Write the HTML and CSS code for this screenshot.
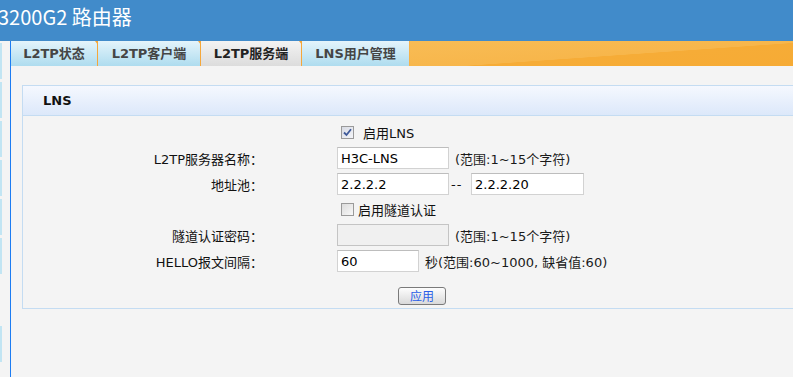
FILE: index.html
```html
<!DOCTYPE html>
<html lang="zh-CN">
<head>
    <meta charset="UTF-8">
    <title>L2TP服务端</title>
    <link rel="stylesheet" href="styles.css">
</head>
<body>
    <div class="header">
        <h1 class="title">3200G2 路由器</h1>
    </div>
    <div class="main">
        <div class="sidebar">
            <div class="side-item"></div>
            <div class="side-item"></div>
            <div class="side-item"></div>
            <div class="side-item"></div>
            <div class="side-item"></div>
            <div class="side-item"></div>
            <div class="side-item gap"></div>
            <div class="side-item"></div>
        </div>
        <div class="content">
            <div class="tabs">
                <div class="tab t1">L2TP状态</div>
                <div class="tab t2">L2TP客户端</div>
                <div class="tab t3 active">L2TP服务端</div>
                <div class="tab t4">LNS用户管理</div>
                <div class="tabs-fill"></div>
            </div>

            <div class="panel">
                <div class="panel-head">LNS</div>
                <div class="panel-body">
                    <div class="row r-check">
                        <div class="label"></div>
                        <div class="value">
                            <span class="cb checked">
                                <svg width="9" height="9" viewBox="0 0 9 9"><path d="M1 4.5 L3.5 7 L8 1.2" fill="none" stroke="#3f5a9a" stroke-width="1.8"/></svg>
                            </span>
                            <span class="cb-text wide">启用LNS</span>
                        </div>
                    </div>
                    <div class="row">
                        <div class="label">L2TP服务器名称<span class="colon">：</span></div>
                        <div class="value">
                            <input class="field w112" type="text" value="H3C-LNS">
                            <span class="hint">(范围:1~15个字符)</span>
                        </div>
                    </div>
                    <div class="row">
                        <div class="label">地址池<span class="colon">：</span></div>
                        <div class="value">
                            <input class="field w112" type="text" value="2.2.2.2">
                            <span class="dash">--</span>
                            <input class="field w113" type="text" value="2.2.2.20">
                        </div>
                    </div>
                    <div class="row r-check2">
                        <div class="label"></div>
                        <div class="value">
                            <span class="cb"></span>
                            <span class="cb-text">启用隧道认证</span>
                        </div>
                    </div>
                    <div class="row">
                        <div class="label">隧道认证密码<span class="colon">：</span></div>
                        <div class="value">
                            <input class="field w112" type="password" disabled>
                            <span class="hint">(范围:1~15个字符)</span>
                        </div>
                    </div>
                    <div class="row">
                        <div class="label">HELLO报文间隔<span class="colon">：</span></div>
                        <div class="value">
                            <input class="field w82" type="text" value="60">
                            <span class="hint">秒(范围:60~1000, 缺省值:60)</span>
                        </div>
                    </div>
                    <div class="row r-btn">
                        <div class="label"></div>
                        <div class="value">
                            <button class="btn" type="button">应用</button>
                        </div>
                    </div>
                </div>
            </div>
        </div>
    </div>
</body>
</html>
```

FILE: styles.css
```css
body {
    margin: 0;
    font-family: "DejaVu Sans", "Noto Sans CJK SC", sans-serif;
    font-size: 13px;
    color: #111;
    background: #f4f4f4;
    overflow: hidden;
}
.header {
    height: 41px;
    background: #418bca;
    overflow: hidden;
}
.title {
    margin: 0 0 0 -2px;
    font-family: "Noto Sans CJK SC", sans-serif;
    font-weight: normal;
    font-size: 20px;
    line-height: 34px;
    color: #fff;
}
.main {
    display: flex;
    min-height: 336px;
}
.sidebar {
    width: 10px;
    padding-top: 2px;
    background: #f4f4f4;
}
.side-item {
    height: 36px;
    margin-bottom: 3px;
    border-left: 2px solid #c2e5f3;
}
.side-item.gap {
    height: 46px;
    border-left-color: #f4f4f4;
}
.content {
    flex: 1;
    border-left: 1px solid #1c7cf2;
}
.tabs {
    display: flex;
    height: 25px;
}
.tab {
    position: relative;
    height: 25px;
    line-height: 26px;
    text-align: center;
    font-weight: bold;
    color: #454545;
    background: linear-gradient(#e4f4fb, #aedcef);
    border-right: 1px solid #f5a73a;
}
.tab::before {
    content: "";
    position: absolute;
    top: 0;
    right: -4px;
    border-left: 3px solid transparent;
    border-right: 3px solid transparent;
    border-top: 4px solid #f5a73a;
}
.tab.active {
    color: #222;
    background: linear-gradient(#f3f3f3, #dcdcdc);
}
.t1 { width: 86px; }
.t2 { width: 102px; }
.t3 { width: 100px; }
.t4 { width: 107px; }
.tab.t4 {
    border-right-color: #f7b24a;
}
.tab.t4::before {
    display: none;
}
.tabs-fill {
    flex: 1;
    background: linear-gradient(176deg, #f8bc55 0%, #f7b64b 55%, #f6ac37 56%, #f6ab35 100%);
}
.panel {
    margin: 19px -40px 0 11px;
    border: 1px solid #c4dcf2;
}
.panel-head {
    height: 29px;
    line-height: 29px;
    padding-left: 20px;
    font-weight: bold;
    color: #111;
    background: linear-gradient(#f5f8fe, #dce8fa);
    border-bottom: 1px solid #c4dcf2;
}
.panel-body {
    padding: 3px 0 3px;
}
.row {
    display: grid;
    grid-template-columns: 240px 1fr;
    column-gap: 74px;
    align-items: center;
    height: 26px;
}
.r-check2 {
    height: 25px;
}
.r-btn {
    height: 31px;
    align-items: end;
}
.label {
    text-align: right;
}
.colon {
    font-family: "Noto Sans CJK SC", sans-serif;
}
.value {
    display: flex;
    align-items: center;
}
.cb {
    display: inline-flex;
    align-items: center;
    justify-content: center;
    box-sizing: border-box;
    width: 13px;
    height: 13px;
    margin-left: 4px;
    border: 1px solid #9a9a9a;
    background: linear-gradient(135deg, #dcdcdc, #f8f8f8);
}
.cb.checked {
    background: linear-gradient(135deg, #d8dbe4, #f4f5f9);
}
.cb-text {
    margin-left: 4px;
}
.cb-text.wide {
    margin-left: 9px;
}
.field {
    box-sizing: border-box;
    height: 22px;
    padding: 0 3px;
    border: 1px solid #d2d2d2;
    border-top-color: #bdbdbd;
    background: #fff;
    font-family: "DejaVu Sans", sans-serif;
    font-size: 13px;
    color: #000;
    outline: none;
}
.field:disabled {
    background: #f0f0f0;
    border-color: #c4c4c4;
}
.w112 { width: 112px; }
.w113 { width: 113px; }
.w82 { width: 82px; }
.hint {
    margin-left: 6px;
    color: #1a1a1a;
}
.dash {
    width: 20px;
    padding-left: 2px;
    letter-spacing: 1px;
}
.btn {
    width: 48px;
    height: 18px;
    margin: 0 0 0 61px;
    padding: 0;
    font-family: "Noto Sans CJK SC", sans-serif;
    font-size: 12px;
    line-height: 16px;
    color: #2a5ee8;
    background: linear-gradient(#fdfdfd, #d9d9d9);
    border: 1px solid #7a7a7a;
    border-radius: 3px;
    cursor: pointer;
}
```
